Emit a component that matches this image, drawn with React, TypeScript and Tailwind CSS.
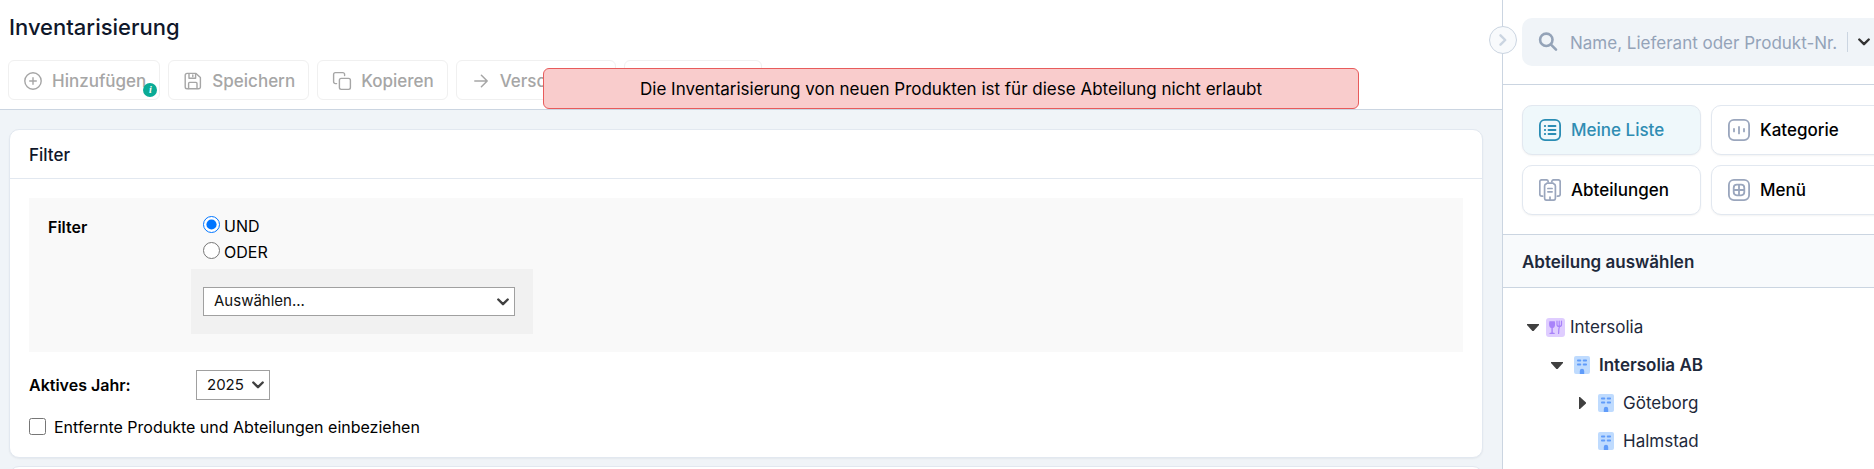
import type { ReactNode } from "react";

type IconProps = { className?: string };

function Stroke({ children, className = "", width = 1.5 }: { children: ReactNode; className?: string; width?: number }) {
  return (
    <svg viewBox="0 0 22 22" className={`shrink-0 ${className}`} fill="none" stroke="currentColor" strokeWidth={width} strokeLinecap="round" strokeLinejoin="round" aria-hidden="true">
      {children}
    </svg>
  );
}

const PlusCircle = () => (
  <Stroke className="size-[22px]" width={1.4}>
    <circle cx="11" cy="11" r="8.2" />
    <path d="M11 7.7v6.6M7.7 11h6.6" />
  </Stroke>
);

const Save = () => (
  <Stroke className="size-[22px]" width={1.4}>
    <path d="M5 3.4h9l4.4 4.2V17a1.8 1.8 0 0 1-1.8 1.8H5A1.8 1.8 0 0 1 3.2 17V5.2A1.8 1.8 0 0 1 5 3.4z" />
    <path d="M7 3.6v4.6h6.6V3.6M10.8 5v1.6M6.6 18.6v-5.2a1 1 0 0 1 1-1H14a1 1 0 0 1 1 1v5.2" />
  </Stroke>
);

const Copy = () => (
  <Stroke className="size-[22px]" width={1.4}>
    <rect x="8.4" y="8.4" width="11" height="11" rx="1.8" />
    <path d="M5.6 13.6H4.4a1.8 1.8 0 0 1-1.8-1.8V4.4a1.8 1.8 0 0 1 1.8-1.8h7.4a1.8 1.8 0 0 1 1.8 1.8v1.2" />
  </Stroke>
);

const ArrowRight = () => (
  <Stroke className="size-[22px]" width={1.5}>
    <path d="M4.8 11h12.4M11.4 5.2l5.8 5.8-5.8 5.8" />
  </Stroke>
);

const ListIcon = () => (
  <Stroke className="size-[22px] text-[#2a8db4]" width={1.8}>
    <rect x="0.9" y="0.9" width="20.2" height="20.2" rx="5" />
    <path d="M9.5 7h7M9.5 11h7M9.5 15h7M5.8 7h.4M5.8 11h.4M5.8 15h.4" />
  </Stroke>
);

const CategoryIcon = () => (
  <Stroke className="size-[22px] text-[#9aa6bd]" width={1.8}>
    <rect x="0.9" y="0.9" width="20.2" height="20.2" rx="5" />
    <path d="M6 9.8v2.6M11 8v6.4M16 9.8v2.6" />
  </Stroke>
);

const DepartmentsIcon = () => (
  <Stroke className="size-[22px] text-[#9aa6bd]" width={1.7}>
    <path d="M3.600 17.200H2.800a2 2 0 0 1-2-2V2.800a2 2 0 0 1 2-2h4.400a2 2 0 0 1 2 2M18.400 17.200h.800a2 2 0 0 0 2-2V2.800a2 2 0 0 0-2-2h-4.400a2 2 0 0 0-2 2" />
    <path d="M5.600 19.200V7a2.200 2.200 0 0 1 1.600-2.100L8 4.200h6l.800.700A2.200 2.200 0 0 1 16.400 7v12.200a2 2 0 0 1-2 2H7.600a2 2 0 0 1-2-2zM8.900 9.500h4.200M8.900 12.800h4.200M11 18v3" />
  </Stroke>
);

const MenuIcon = () => (
  <Stroke className="size-[22px] text-[#9aa6bd]" width={1.8}>
    <rect x="0.9" y="0.9" width="20.2" height="20.2" rx="5" />
    <rect x="5.700" y="5.700" width="10.600" height="10.600" rx="3.200" />
    <path d="M11 6v10M6 11h10" />
  </Stroke>
);

const SearchIcon = () => (
  <svg viewBox="0 0 20 20" className="size-5 shrink-0 text-[#94a3b8]" fill="none" stroke="currentColor" strokeWidth="2.600" strokeLinecap="round" aria-hidden="true">
    <circle cx="8.300" cy="7.800" r="6.200" />
    <path d="M13 12.600l5 5" />
  </svg>
);

const Chevron = ({ className = "" }: IconProps) => (
  <svg viewBox="0 0 12 8" className={className} fill="none" stroke="currentColor" strokeWidth="2.400" strokeLinecap="round" strokeLinejoin="round" aria-hidden="true">
    <path d="M1.300 1.500L6 6.200l4.700-4.700" />
  </svg>
);

const BuildingIcon = () => (
  <svg viewBox="0 0 16 18" className="h-[18px] w-4 shrink-0" aria-hidden="true">
    <rect width="16" height="18" rx="2" fill="#bfdbfe" />
    <g fill="#609cfa">
      <rect x="3" y="3.500" width="4.200" height="2" rx="0.800" />
      <rect x="8.800" y="3.500" width="4.200" height="2" rx="0.800" />
      <rect x="3" y="7.500" width="4.200" height="2" rx="0.800" />
      <rect x="8.800" y="7.500" width="4.200" height="2" rx="0.800" />
      <path d="M5.800 18v-3a2.200 2.200 0 0 1 4.400 0v3z" />
    </g>
  </svg>
);

const RestaurantIcon = () => (
  <svg viewBox="0 0 19 19" className="size-[19px] shrink-0" aria-hidden="true">
    <rect width="19" height="19" rx="3" fill="#dfcdff" />
    <path d="M3.400 3.200h5.400c.8 3.800.1 6.400-2 6.900v4.400l1.900.5v.9H3.500V15l1.900-.5v-4.400c-2.100-.5-2.800-3.100-2-6.900z" fill="#a883fa" />
    <path d="M11 3.200v3.300c0 1.300.8 2 2.200 2s2.300-.7 2.300-2V3.200M13.200 3.200v5.200M13.500 8.400c-.8 2-.9 4-.9 7" fill="none" stroke="#a883fa" strokeWidth="1.200" strokeLinecap="round" />
  </svg>
);

function Caret({ open }: { open: boolean }) {
  return (
    <svg viewBox="0 0 12 12" className="size-3" fill="#404040" aria-hidden="true">
      {open ? <path d="M0 3h12v1L6.600 10H5.400L0 4z" /> : <path d="M3 0h1l6 5.400v1.200L4 12H3z" />}
    </svg>
  );
}

function ToolButton({ icon, label, badge }: { icon: ReactNode; label: string; badge?: boolean }) {
  return (
    <button type="button" disabled className="relative flex h-10 items-center gap-2 rounded-md border border-[#f0f0f0] bg-white pt-0.5 pr-[13px] pl-[13px] text-[17px] leading-6 font-medium text-[#a6a6a6]">
      {icon}
      {label}
      {badge && (
        <span className="absolute right-0.5 bottom-0.5 flex size-3.5 items-center justify-center rounded-full bg-[#0aab96] font-['Liberation_Serif',serif] text-[10px] leading-none font-bold text-white italic">
          i
        </span>
      )}
    </button>
  );
}

function TabButton({ icon, label, active }: { icon: ReactNode; label: string; active?: boolean }) {
  return (
    <button
      type="button"
      className={`flex h-[50px] items-center gap-2.5 rounded-[10px] border border-[#e2e8f0] px-4 text-[17px] leading-6 font-medium shadow-xs ${active ? "bg-[#eff8fb] text-[#2f8db3]" : "bg-white text-black"}`}
    >
      {icon}
      {label}
    </button>
  );
}

function SelectBox({ id, label, option, className }: { id: string; label: string; option: string; className: string }) {
  return (
    <div className={`relative ${className}`}>
      <select id={id} aria-label={label} className="size-full appearance-none border border-[#a0a0a0] bg-white pl-2.5 text-[15px] text-[#111]">
        <option>{option}</option>
      </select>
      <Chevron className="pointer-events-none absolute top-[11px] right-1.5 h-2 w-3 text-[#404040]" />
    </div>
  );
}

function TreeToggle({ open, label }: { open: boolean; label: string }) {
  return (
    <button type="button" aria-label={label} aria-expanded={open} className="flex w-3 justify-center">
      <Caret open={open} />
    </button>
  );
}

export default function App() {
  return (
    <div className="flex h-screen overflow-hidden bg-white font-[Inter,sans-serif] text-black">
      <main className="relative flex min-w-0 flex-1 flex-col bg-[#f0f4f8]">
        <header className="border-b border-[#cbd5e1] bg-white px-2 pb-[9px]">
          <h1 className="flex h-[60px] items-center px-px pb-1.5 text-[22px] font-medium text-[#0f172a]">Inventarisierung</h1>
          <div className="flex gap-2">
            <ToolButton icon={<PlusCircle />} label="Hinzufügen" badge />
            <ToolButton icon={<Save />} label="Speichern" />
            <ToolButton icon={<Copy />} label="Kopieren" />
            <ToolButton icon={<ArrowRight />} label="Verschieben" />
            <button type="button" disabled aria-label="Weitere Aktionen" className="h-10 w-[138px] rounded-md border border-[#f0f0f0] bg-white" />
          </div>
        </header>

        <div role="alert" className="absolute top-[68px] right-[143px] left-[543px] flex h-[41px] items-center justify-center rounded-md border border-[#e85b5b] bg-[#f9cccc] text-[17px] leading-6 text-black">
          Die Inventarisierung von neuen Produkten ist für diese Abteilung nicht erlaubt
        </div>

        <div className="flex flex-col gap-2 pt-[19px] pr-[19px] pl-[9px]">
          <section className="rounded-[10px] border border-[#e2e8f0] bg-white shadow-xs">
            <h2 className="flex h-[49px] items-center border-b border-[#e2e8f0] px-[19px] pt-px text-[17px] leading-6 font-medium text-[#0f172a]">Filter</h2>
            <div className="px-[19px] pt-[19px] pb-[22px]">
              <fieldset className="flex bg-[#f9f9f9] pt-[18px] pb-[18px] pl-[19px] text-base">
                <div className="w-[143px] shrink-0 pt-px leading-5 font-semibold">Filter</div>
                <div>
                  <div className="flex flex-col gap-[9px] pb-2.5 pl-3">
                    <label className="flex h-[17px] items-center gap-1">
                      <input type="radio" name="op" defaultChecked className="size-[17px] accent-[#0075ff]" />
                      <span className="pt-0.5">UND</span>
                    </label>
                    <label className="flex h-[17px] items-center gap-1">
                      <input type="radio" name="op" className="size-[17px] accent-[#0075ff]" />
                      <span className="pt-0.5">ODER</span>
                    </label>
                  </div>
                  <div className="bg-[#f1f1f1] py-[18px] pr-[18px] pl-3">
                    <SelectBox id="filter" label="Filter auswählen" option="Auswählen..." className="h-[29px] w-[312px]" />
                  </div>
                </div>
              </fieldset>
              <div className="flex items-center pt-[18px] text-base">
                <label htmlFor="year" className="w-[167px] font-semibold">Aktives Jahr:</label>
                <SelectBox id="year" label="Aktives Jahr" option="2025" className="h-[30px] w-[74px]" />
              </div>
              <label className="box-content flex h-[17px] items-center gap-2 pt-[18px] text-base">
                <input type="checkbox" className="size-[17px]" />
                Entfernte Produkte und Abteilungen einbeziehen
              </label>
            </div>
          </section>
          <section className="h-20 rounded-[10px] border border-[#e2e8f0] bg-white" />
        </div>
      </main>

      <aside className="relative w-[372px] shrink-0 border-l border-[#cbd5e1] bg-white">
        <button type="button" aria-label="Seitenleiste einklappen" className="absolute top-[26px] left-[-14px] flex size-7 items-center justify-center rounded-full border border-[#cbd5e1] bg-[#f8fafc] text-[#cbd5e1]">
          <Chevron className="h-2 w-3 -rotate-90" />
        </button>
        <div className="w-[406px]">
          <div className="border-b border-[#cbd5e1] px-[19px] pt-[18px] pb-[18px]">
            <div className="flex h-12 items-center rounded-[10px] bg-[#f0f4f8] pr-5 pl-4">
              <SearchIcon />
              <input type="text" aria-label="Suche" placeholder="Name, Lieferant oder Produkt-Nr." className="ml-3 h-7 min-w-0 flex-1 pt-0.5 text-[17px] leading-6 outline-none placeholder:text-[#94a3b8]" />
              <span className="mr-2.5 h-5 w-px bg-[#cbd5e1]" />
              <button type="button" aria-label="Suchoptionen">
                <Chevron className="h-2 w-3 text-[#333]" />
              </button>
            </div>
          </div>
          <div className="grid grid-cols-2 gap-2.5 border-b border-[#cbd5e1] px-[19px] pt-5 pb-[19px]">
            <TabButton icon={<ListIcon />} label="Meine Liste" active />
            <TabButton icon={<CategoryIcon />} label="Kategorie" />
            <TabButton icon={<DepartmentsIcon />} label="Abteilungen" />
            <TabButton icon={<MenuIcon />} label="Menü" />
          </div>
          <h2 className="flex h-[53px] items-center border-b border-[#cbd5e1] bg-[#f8fafc] px-[19px] pt-px text-[17px] leading-6 font-semibold text-[#1e293b]">Abteilung auswählen</h2>
          <ul className="pt-5 text-[17px] leading-6 text-[#1e293b]">
            <li className="flex h-[38px] items-center pl-6">
              <TreeToggle open label="Intersolia" />
              <span className="ml-[7px]"><RestaurantIcon /></span>
              <span className="ml-[5px]">Intersolia</span>
            </li>
            <li className="flex h-[38px] items-center pl-12">
              <TreeToggle open label="Intersolia AB" />
              <span className="ml-[11px]"><BuildingIcon /></span>
              <span className="ml-[9px] font-semibold">Intersolia AB</span>
            </li>
            <li className="flex h-[38px] items-center pl-[73px]">
              <TreeToggle open={false} label="Göteborg" />
              <span className="ml-2.5"><BuildingIcon /></span>
              <span className="ml-[9px]">Göteborg</span>
            </li>
            <li className="flex h-[38px] items-center pl-[95px]">
              <BuildingIcon />
              <span className="ml-[9px]">Halmstad</span>
            </li>
          </ul>
        </div>
      </aside>
    </div>
  );
}
